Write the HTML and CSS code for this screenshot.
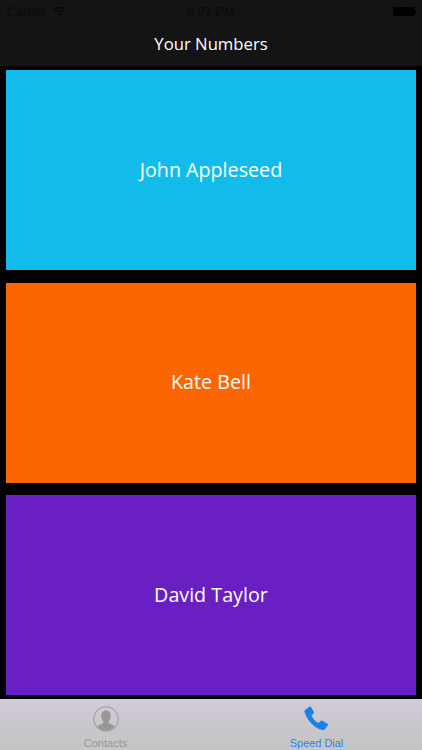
FILE: index.html
```html
<!DOCTYPE html>
<html lang="en">
<head>
<meta charset="utf-8">
<title>Your Numbers</title>
<link rel="stylesheet" href="styles.css">
</head>
<body>
<div class="app">
  <header class="top">
    <div class="status">
      <div class="status-left">
        <span>Carrier</span>
        <svg class="wifi" width="13" height="10" viewBox="0 0 13 10"><path d="M0.5 3.400a8.500 8.500 0 0 1 12 0l-1 1a7 7 0 0 0-10 0z M2.600 5.500a5.500 5.500 0 0 1 7.800 0l-1 1a4 4 0 0 0-5.800 0z M4.700 7.600a2.500 2.500 0 0 1 3.600 0L6.500 9.500z" fill="#050505"/></svg>
      </div>
      <span class="clock">8:07 PM</span>
      <div class="battery"><span class="battery-body"></span><span class="battery-tip"></span></div>
    </div>
    <h1 class="title">Your Numbers</h1>
  </header>
  <main class="cards">
    <div class="card blue">John Appleseed</div>
    <div class="card orange">Kate Bell</div>
    <div class="card purple">David Taylor</div>
  </main>
  <nav class="tabs">
    <div class="tab">
      <svg width="26" height="26" viewBox="0 0 26 26"><defs><clipPath id="c"><circle cx="13" cy="13" r="11.500"/></clipPath></defs><circle cx="13" cy="13" r="12.300" fill="none" stroke="#979797" stroke-width="1"/><g clip-path="url(#c)" fill="#979797"><path d="M13 4.500c-3 0-4.800 2.300-4.800 5.300 0 2.100.8 4 2 5.200.4.500.4 1.500 0 2-1 1.200-5.500 1.800-6.500 4.500V26h18.600v-4.500c-1-2.700-5.500-3.300-6.500-4.500-.4-.5-.4-1.500 0-2 1.200-1.200 2-3.100 2-5.200 0-3-1.800-5.300-4.800-5.300z"/></g></svg>
      <span class="tab-label">Contacts</span>
    </div>
    <div class="tab active">
      <svg width="26" height="26" viewBox="0 0 26 26"><path d="M1.500 3.700 5.200.8c.7-.5 1.400-.4 1.800.3l2.800 4.600c.4.700.2 1.300-.4 1.800L8 8.800c-.4.300-.5.600-.3 1.100 1.400 3 3.500 5.200 6.300 6.800.5.300.8.200 1.100-.1l1.500-1.600c.5-.6 1.100-.7 1.800-.3l5 3c.7.400.8 1.100.3 1.800l-2.800 3.700c-.6.800-1.400 1-2.300.8C10.500 22.500 3.500 15 .5 6 .2 5.100.6 4.300 1.500 3.700z" fill="#1a7fe8"/></svg>
      <span class="tab-label">Speed Dial</span>
    </div>
  </nav>
</div>
</body>
</html>
```
FILE: styles.css
```css
* { box-sizing: border-box; }
html, body { margin: 0; padding: 0; }
body { background: #000; font-family: "Open Sans", "Liberation Sans", sans-serif; }
.app { width: 422px; height: 750px; display: flex; flex-direction: column; background: #000; overflow: hidden; }
.top { height: 66px; background: #141414; display: flex; flex-direction: column; flex: none; }
.status { height: 22px; padding: 0 7px; display: flex; align-items: center; justify-content: space-between; position: relative; font-family: "Liberation Sans", sans-serif; font-size: 13px; color: #000; }
.status-left { display: flex; align-items: center; gap: 6px; color: #0a0a0a; }
.wifi { display: block; }
.clock { position: absolute; left: 0; right: 0; text-align: center; color: #0a0a0a; }
.battery { display: flex; align-items: center; margin-right: -1px; margin-left: auto; }
.battery-body { width: 22px; height: 9px; background: #000; border-radius: 1px; }
.battery-tip { width: 1px; height: 3px; background: #000; }
.title { margin: 0; flex: 1; display: flex; align-items: center; justify-content: center; font-size: 16.700px; font-weight: 400; color: #fff; padding-bottom: 2px; }
.cards { flex: 1; padding: 4px 6.500px 4px 6.400px; display: flex; flex-direction: column; gap: 12.500px; }
.card { height: 200px; display: flex; align-items: center; justify-content: center; color: #fff; font-size: 19.700px; padding-bottom: 2px; }
.blue { background: #12bbea; }
.orange { background: #fb6600; }
.purple { background: #6a1fc2; }
.tabs { height: 51px; flex: none; display: flex; background: linear-gradient(#d2cbdb, #c8c6cb 50%, #c5c5c5); }
.tab { flex: 1; display: flex; flex-direction: column; align-items: center; padding-top: 7px; color: #979797; }
.tab.active { color: #2b84e4; }
.tab svg { display: block; }
.tab-label { font-family: "Liberation Sans", sans-serif; font-size: 11px; line-height: 13px; margin-top: 5px; }
.tab.active .tab-label { letter-spacing: -0.050px; }
```
